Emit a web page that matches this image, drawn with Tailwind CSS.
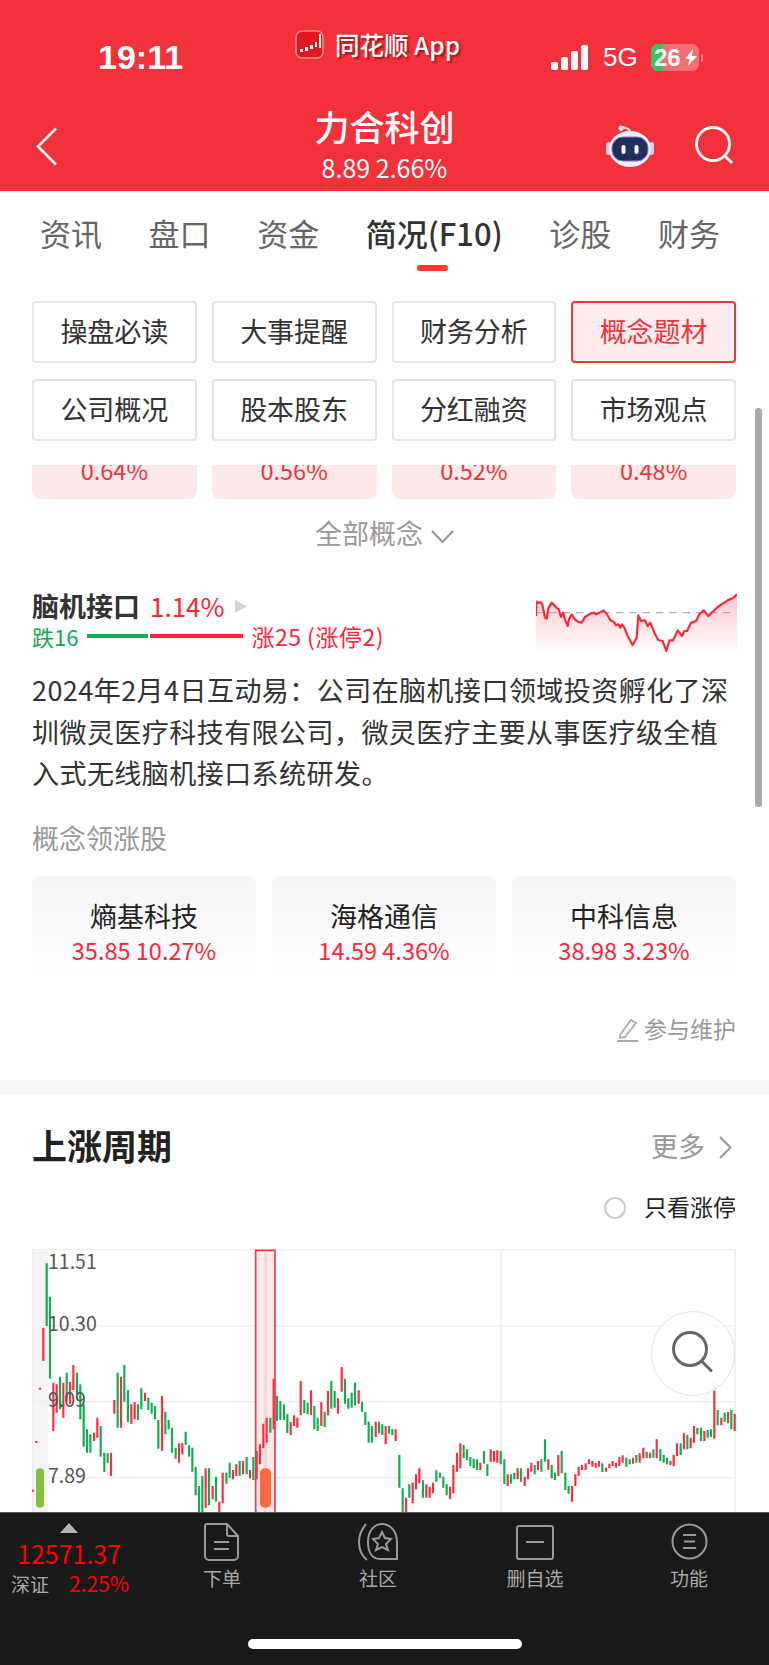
<!DOCTYPE html>
<html lang="zh">
<head>
<meta charset="utf-8">
<script src="https://cdn.jsdelivr.net/npm/@tailwindcss/browser@4"></script>
<title>力合科创</title>
</head>
<body>
<div class="relative w-[769px] h-[1665px] overflow-hidden flex flex-col bg-white font-['Noto_Sans_CJK_SC','Noto_Sans',sans-serif]">

  <!-- red header -->
  <header class="flex-none h-[191px] bg-[#f2313b] text-white">
    <div class="flex items-start h-[92px]">
      <div class="w-[295px] pl-[98px] pt-[41px] leading-[33px] text-[34px] font-bold font-['Liberation_Sans',sans-serif]">19:11</div>
      <div class="w-[256px] pt-[30px] flex items-start gap-[11px]">
        <svg class="w-[29px] h-[29px]" viewBox="0 0 29 29">
          <rect x="1" y="1" width="27" height="27" rx="6" fill="#e01820" stroke="#f98a8f" stroke-width="1.500"/>
          <path d="M5 19h3v3h-3zM10 17h3v4h-3zM15 15h3v4h-3zM20 12h2v5h-2z" fill="#fff"/>
          <path d="M25 4v14" stroke="#fff" stroke-width="2"/>
        </svg>
        <div class="text-[24.500px] leading-[29px] font-medium whitespace-nowrap [text-shadow:2px_2px_2px_rgba(90,0,0,0.55)]">同花顺 App</div>
      </div>
      <div class="pt-[44px] flex items-start">
        <svg class="w-[37px] h-[25px] mt-px" viewBox="0 0 37 25" fill="#fff">
          <rect x="0" y="17" width="7" height="8" rx="2"/><rect x="10" y="12" width="7" height="13" rx="2"/><rect x="20" y="6" width="7" height="19" rx="2"/><rect x="30" y="0" width="7" height="25" rx="2"/>
        </svg>
        <div class="ml-[15px] w-[48px] text-[26px] leading-[27px] font-medium font-['Liberation_Sans',sans-serif]">5G</div>
        <div class="relative w-[48px] h-[27px] rounded-[7px] overflow-hidden bg-white/30 flex items-center">
          <div class="w-[12px] h-full bg-[#34c759]"></div>
          <div class="absolute left-[3px] top-0 text-[24px] leading-[27px] font-bold font-['Liberation_Sans',sans-serif]">26</div>
          <svg class="absolute left-[34px] top-[5px] w-[12px] h-[17px]" viewBox="0 0 12 17"><path d="M8 0L0 10h4.500L3 17l9-10H7z" fill="#fff"/></svg>
        </div>
        <div class="w-[2px] h-[8px] mt-[10px] ml-[2px] rounded-r bg-white/40"></div>
      </div>
    </div>
    <div class="grid grid-cols-[180px_1fr_180px] h-[99px]">
      <div class="pl-[36px] pt-[35px]">
        <svg class="w-[22px] h-[39px]" viewBox="0 0 22 39" fill="none" stroke="#fff" stroke-width="2.500"><path d="M20 1.500L2 19.500l18 18"/></svg>
      </div>
      <div class="flex flex-col items-center pt-[14px]">
        <div class="text-[35px] leading-[40px] font-medium">力合科创</div>
        <div class="text-[25px] leading-[30px] mt-[6px]">8.89 2.66%</div>
      </div>
      <div class="flex items-start pl-[17px] pt-[33px]">
        <svg class="w-[48px] h-[43px] flex-none" viewBox="0 0 48 43">
          <path d="M15 6c-1-3 2-5 4-3 2 0 4 1 5 3" fill="none" stroke="#dfe0f5" stroke-width="2"/>
          <circle cx="15" cy="3" r="2.500" fill="#eef"/>
          <rect x="0" y="17" width="5" height="13" rx="2.500" fill="#cfd2ee"/>
          <rect x="43" y="17" width="5" height="13" rx="2.500" fill="#cfd2ee"/>
          <ellipse cx="24" cy="24" rx="21" ry="18" fill="#eef0fb"/>
          <rect x="6" y="12" width="36" height="24" rx="11" fill="#20305a" stroke="#8a6fe0" stroke-width="1"/>
          <rect x="15.500" y="20" width="4" height="9" rx="2" fill="#fff"/>
          <rect x="28.500" y="20" width="4" height="9" rx="2" fill="#fff"/>
        </svg>
        <svg class="ml-[41px] mt-[1px] w-[38px] h-[40px] flex-none" viewBox="0 0 38 40" fill="none" stroke="#fff" stroke-width="2.800"><circle cx="18" cy="18" r="16.500"/><path d="M30 30l7 7"/></svg>
      </div>
    </div>
  </header>

  <!-- scrolling content -->
  <main class="relative flex-1 overflow-hidden">
    <!-- tabs -->
    <nav class="flex justify-between pl-[40px] pr-[49px] pt-[22px] h-[110px] text-[31px] leading-[40px] text-[#666]">
      <span>资讯</span><span>盘口</span><span>资金</span>
      <span class="relative font-medium text-[#333]">简况(F10)<span class="absolute left-[51px] top-[52px] w-[31px] h-[6px] rounded-full bg-[#ff3b30]"></span></span>
      <span>诊股</span><span>财务</span>
    </nav>

    <!-- sub-tabs -->
    <div class="grid grid-cols-4 gap-x-[15px] gap-y-[16px] pl-[32px] pr-[33px] text-[27px] text-[#333]">
      <div class="h-[62px] pb-[2px] flex items-center justify-center border-2 border-[#e4e4e4] rounded-[4px]">操盘必读</div>
      <div class="h-[62px] pb-[2px] flex items-center justify-center border-2 border-[#e4e4e4] rounded-[4px]">大事提醒</div>
      <div class="h-[62px] pb-[2px] flex items-center justify-center border-2 border-[#e4e4e4] rounded-[4px]">财务分析</div>
      <div class="h-[62px] pb-[2px] flex items-center justify-center border-2 border-[#f0343c] rounded-[4px] bg-[#fdecee] text-[#f0343c]">概念题材</div>
      <div class="h-[62px] pb-[2px] flex items-center justify-center border-2 border-[#e4e4e4] rounded-[4px]">公司概况</div>
      <div class="h-[62px] pb-[2px] flex items-center justify-center border-2 border-[#e4e4e4] rounded-[4px]">股本股东</div>
      <div class="h-[62px] pb-[2px] flex items-center justify-center border-2 border-[#e4e4e4] rounded-[4px]">分红融资</div>
      <div class="h-[62px] pb-[2px] flex items-center justify-center border-2 border-[#e4e4e4] rounded-[4px]">市场观点</div>
    </div>

    <!-- clipped concept cards -->
    <div class="grid grid-cols-4 gap-x-[15px] pl-[32px] pr-[33px] mt-[24px] text-[23.500px] leading-[24px] text-[#f0343c] text-center">
      <div class="h-[34px] rounded-b-[8px] overflow-hidden bg-[#fde8ea]"><div class="-mt-[7px]">0.64%</div></div>
      <div class="h-[34px] rounded-b-[8px] overflow-hidden bg-[#fde8ea]"><div class="-mt-[7px]">0.56%</div></div>
      <div class="h-[34px] rounded-b-[8px] overflow-hidden bg-[#fde8ea]"><div class="-mt-[7px]">0.52%</div></div>
      <div class="h-[34px] rounded-b-[8px] overflow-hidden bg-[#fde8ea]"><div class="-mt-[7px]">0.48%</div></div>
    </div>

    <div class="flex items-center justify-center gap-[8px] mt-[17px] h-[36px] text-[27px] leading-[36px] text-[#999]">
      <span class="pb-[2px]">全部概念</span>
      <svg class="w-[23px] h-[14px] mt-[6px]" viewBox="0 0 23 14" fill="none" stroke="#999" stroke-width="2.200"><path d="M1 1l10.500 11L22 1"/></svg>
    </div>

    <!-- brain computer interface -->
    <section class="px-[32px] mt-[36px]">
      <div class="flex justify-between h-[68px]">
        <div>
          <div class="flex items-center h-[36px] text-[27px] leading-[36px]">
            <span class="font-bold text-[#333]">脑机接口</span>
            <span class="ml-[10px] text-[26px] text-[#ff2436]">1.14%</span>
            <svg class="ml-[11px] w-[12px] h-[13px]" viewBox="0 0 12 13"><path d="M0 0l12 6.500L0 13z" fill="#d2d2d2"/></svg>
          </div>
          <div class="flex items-center h-[24px] text-[23px] leading-[24px] whitespace-nowrap">
            <span class="text-[22px] text-[#0fae50]">跌16</span>
            <span class="ml-[9px] w-[61px] h-[4px] bg-[#0fae50]"></span>
            <span class="ml-[2px] w-[93px] h-[4px] bg-[#ff2436]"></span>
            <span class="ml-[8px] tracking-[0.5px] text-[#ff2436]">涨25 (涨停2)</span>
          </div>
        </div>
        <svg class="w-[201px] h-[68px]" viewBox="45 51 603 204">
          <defs><linearGradient id="sparkFill" x1="0" y1="0" x2="0" y2="1"><stop offset="0" stop-color="#ff2436" stop-opacity="0.25"/><stop offset="1" stop-color="#ff2436" stop-opacity="0"/></linearGradient></defs>
          <path fill="url(#sparkFill)" d="M45 135L46 92L52 95L60 94L65 105L72 140L77 143L82 112L92 95L100 103L108 112L113 114L120 138L126 125L132 145L140 165L144 145L152 130L162 145L172 153L182 155L192 138L205 130L218 125L225 130L238 124L248 118L258 130L268 148L278 152L285 163L292 160L298 170L303 160L310 170L320 195L335 222L347 200L352 133L360 150L372 148L380 165L388 155L400 185L412 207L425 210L436 240L445 208L456 208L470 178L483 195L490 180L498 180L510 155L525 150L535 130L548 118L562 135L572 125L590 108L605 98L620 88L635 82L648 70V255H45Z"/>
          <path d="M45 125H635" stroke="#b0b0b0" stroke-width="3.500" stroke-dasharray="22 18" fill="none"/>
          <path fill="none" stroke="#ff2436" stroke-width="6.500" stroke-linejoin="round" d="M45 135L46 92L52 95L60 94L65 105L72 140L77 143L82 112L92 95L100 103L108 112L113 114L120 138L126 125L132 145L140 165L144 145L152 130L162 145L172 153L182 155L192 138L205 130L218 125L225 130L238 124L248 118L258 130L268 148L278 152L285 163L292 160L298 170L303 160L310 170L320 195L335 222L347 200L352 133L360 150L372 148L380 165L388 155L400 185L412 207L425 210L436 240L445 208L456 208L470 178L483 195L490 180L498 180L510 155L525 150L535 130L548 118L562 135L572 125L590 108L605 98L620 88L635 82L648 70"/>
        </svg>
      </div>
      <p class="mt-[13px] text-[27px] leading-[41.500px] tracking-[0.45px] text-[#333]">2024年2月4日互动易：公司在脑机接口领域投资孵化了深圳微灵医疗科技有限公司，微灵医疗主要从事医疗级全植入式无线脑机接口系统研发。</p>
      <div class="mt-[26px] text-[27px] leading-[36px] text-[#999]">概念领涨股</div>
      <div class="grid grid-cols-3 gap-x-[16px] mt-[20px] pr-px text-center">
        <div class="h-[108px] pt-[21px] rounded-t-[8px] bg-gradient-to-b from-[#f5f5f5] to-white">
          <div class="text-[27px] leading-[38px] text-[#222]">熵基科技</div>
          <div class="text-[23.500px] leading-[30px] text-[#ff2436]">35.85 10.27%</div>
        </div>
        <div class="h-[108px] pt-[21px] rounded-t-[8px] bg-gradient-to-b from-[#f5f5f5] to-white">
          <div class="text-[27px] leading-[38px] text-[#222]">海格通信</div>
          <div class="text-[23.500px] leading-[30px] text-[#ff2436]">14.59 4.36%</div>
        </div>
        <div class="h-[108px] pt-[21px] rounded-t-[8px] bg-gradient-to-b from-[#f5f5f5] to-white">
          <div class="text-[27px] leading-[38px] text-[#222]">中科信息</div>
          <div class="text-[23.500px] leading-[30px] text-[#ff2436]">38.98 3.23%</div>
        </div>
      </div>
      <div class="flex justify-end items-center gap-[5px] mt-[31px] pr-px h-[30px] text-[23px] leading-[30px] text-[#999]">
        <svg class="w-[22px] h-[24px]" viewBox="0 0 22 24" fill="none" stroke="#aaa" stroke-width="1.800"><path d="M3 17L14 2l5 3L8 19l-5 1zM0 23h21"/></svg>
        <span class="pb-[4px]">参与维护</span>
      </div>
    </section>

    <div class="h-[15px] mt-[35px] bg-[#f6f6f6]"></div>

    <!-- rising cycle -->
    <section class="pl-[32px] pr-[33px] pt-[31px]">
      <div class="flex items-center justify-between h-[44px]">
        <h2 class="pb-[5px] text-[35px] leading-[44px] font-bold text-[#222]">上涨周期</h2>
        <div class="flex items-center gap-[14px] text-[27px] text-[#999]">
          <span class="pb-[2px]">更多</span>
          <svg class="w-[13px] h-[23px] mr-[4px]" viewBox="0 0 13 23" fill="none" stroke="#999" stroke-width="2"><path d="M1 1l10.500 10.500L1 22"/></svg>
        </div>
      </div>
      <div class="flex justify-end items-center gap-[18px] mt-[23px] h-[30px] text-[23px] leading-[30px] text-[#222]">
        <span class="w-[22px] h-[22px] rounded-full border-2 border-[#ccc]"></span>
        <span class="pb-[4px]">只看涨停</span>
      </div>
    </section>

    <!-- chart: a free canvas -->
    <div class="relative h-[264px] mt-[26px]">
      <svg class="absolute left-0 top-0 w-[769px] h-[264px]" viewBox="0 54 2307 792">
        <rect x="100" y="60" width="44" height="790" fill="#f4f4f7"/>
        <path d="M96 55H2211M96 285H2211M96 512H2211M96 740H2211M98 55V850M1503 55V850M2205 55V850" stroke="#efefef" stroke-width="5" fill="none"/>
        <rect x="767" y="58" width="58" height="800" fill="#fde8ea" stroke="#ff3347" stroke-width="5"/>
        <path d="M797 60V850" stroke="#f7d4d8" stroke-width="8"/>
        <g fill="none" stroke-width="6.500">
          <path stroke="#0fae50" d="M140 97V285M150 197V443M180 437V535M200 425V510M231 425V490M241 460V565M251 520V647M261 595V665M271 610V665M302 585V677M313 665V723M323 667V695M353 425V590M373 402V512M384 477V573M414 520V567M424 472V535M445 500V537M455 515V548M465 525V565M475 567V653M496 542V610M506 567V595M516 590V665M527 650V683M557 602V642M567 643V677M577 650V722M587 707V793M597 765V847M607 735V847M627 712V823M648 737V812M679 725V758M689 695V740M719 690V735M740 678V730M760 678V747M811 560V605M831 495V570M841 510V567M852 520V567M862 550V606M913 507V547M923 515V550M943 525V595M953 560V600M974 542V588M994 450V533M1004 480V530M1035 443V518M1045 502V533M1055 485V530M1065 455V523M1086 512V542M1096 543V582M1106 572V635M1116 585V635M1137 572V607M1147 580V612M1167 585V608M1177 595V612M1198 672V770"/>
          <path stroke="#ff2a40" d="M130 290V390M120 470V476M109 630V636M99 776V782M160 455V600M170 460V545M190 455V560M210 453V520M220 402V477M282 605V630M292 560V620M333 665V735M343 507V548M363 437V590M394 520V578M404 513V565M435 485V510M486 495V660M537 637V695M547 637V670M617 712V830M638 765V805M658 812V847M668 725V817M699 717V745M709 700V735M729 690V730M750 717V742M770 660V745M780 640V700M790 578V652M800 560V635M821 443V595M872 573V612M882 553V585M892 560V590M902 450V553M933 478V552M964 513V585M984 480V553M1014 502V548M1025 408V482M1076 478V518M1127 572V618M1157 585V640M1187 595V630"/>
          <g transform="translate(1200 0)">
            <path stroke="#0fae50" d="M8 772V847M28 760V800M69 748V800M109 718V752M120 725V740M130 737V770M140 760V793M191 642V682M201 655V688M211 678V705M221 683V712M231 685V717M252 660V698M262 700V735M302 660V700M313 685V760M333 730V758M343 725V745M363 712V752M404 702V730M424 685V722M435 625V692M455 702V742M465 725V747M485 660V727M496 725V777M506 765V788M607 697V723M679 680V707M689 685V700M709 672V695M740 662V682M760 655V680M781 655V690M791 672V695M801 680V700M842 637V672M862 612V655M892 590V610M903 590V630M923 597V620M933 595V618M953 537V583M974 545V572M994 537V595"/>
            <path stroke="#ff2a40" d="M18 800V847M38 755V817M48 730V775M58 712V757M79 760V800M89 767V800M99 755V787M150 767V805M160 702V787M171 665V722M181 637V712M241 695V717M272 655V692M282 660V692M292 658V695M323 730V765M353 712V745M374 737V765M384 712V745M394 695V722M414 690V717M445 685V717M475 672V735M516 765V812M526 730V765M536 707V735M546 702V717M557 697V717M567 685V700M577 690V707M587 695V710M597 690V707M618 710V722M628 698V712M638 690V705M648 695V710M658 678V705M668 673V695M699 680V698M719 667V695M730 650V682M750 665V682M770 625V682M811 690V702M821 672V705M831 637V675M852 607V655M872 620V652M882 585V635M913 600V630M943 480V623M964 560V583M984 543V577M1004 548V600"/>
            <path stroke="#fdb6bf" d="M943 455V480"/>
          </g>
        </g>
        <rect x="108" y="712" width="24" height="118" rx="12" fill="#84c13c"/>
        <circle cx="120" cy="855" r="11" fill="#f0a030"/>
        <rect x="780" y="712" width="33" height="118" rx="14" fill="#ff6a3d"/>
        <circle cx="796" cy="856" r="14" fill="#5878e0"/>
      </svg>
      <span class="absolute left-[48px] top-[-1px] text-[19.500px] leading-[26px] text-[#555]">11.51</span>
      <span class="absolute left-[48px] top-[61px] text-[19.500px] leading-[26px] text-[#555]">10.30</span>
      <span class="absolute left-[48px] top-[137px] text-[19.500px] leading-[26px] text-[#555]">9.09</span>
      <span class="absolute left-[48px] top-[213px] text-[19.500px] leading-[26px] text-[#555]">7.89</span>
      <div class="absolute left-[651px] top-[62px] w-[84px] h-[85px] rounded-full border border-[#e4e4e4] bg-white/70 flex items-center justify-center">
        <svg class="w-[42px] h-[44px] -mt-[1px]" viewBox="0 0 42 44" fill="none" stroke="#666" stroke-width="3"><circle cx="18" cy="18" r="16.500"/><path d="M30 30.500l9 9" stroke-linecap="round"/></svg>
      </div>
    </div>
  </main>

  <!-- scrollbar -->
  <div class="absolute left-[755px] top-[408px] w-[7px] h-[399px] rounded-full bg-[#a9a9a9]"></div>

  <!-- bottom bar -->
  <footer class="flex-none h-[153px] bg-[#191919] border-t border-[#555] flex flex-col">
    <div class="grid grid-cols-[147px_150px_162px_152px_158px] h-[126px] text-[#a8a8a8]">
      <div class="flex flex-col">
        <svg class="ml-[60px] mt-[10px] w-[18px] h-[10px]" viewBox="0 0 18 10"><path d="M9 0l9 10H0z" fill="#b4b4b4"/></svg>
        <div class="ml-[17px] mt-[5px] text-[25px] leading-[30px] text-[#ff0000]">12571.37</div>
        <div class="flex items-center mt-[1px] h-[30px]">
          <span class="ml-[11px] text-[19px]">深证</span>
          <span class="ml-[20px] text-[21px] text-[#ff0000]">2.25%</span>
        </div>
      </div>
      <div class="flex flex-col items-center">
        <svg class="mt-[10px] w-[36px] h-[38px]" viewBox="0 0 36 38" fill="none" stroke="#999" stroke-width="2"><path d="M3 1h20l11 12v20a4 4 0 0 1-4 4H5a4 4 0 0 1-4-4V3a2 2 0 0 1 2-2zM23 1v10a2 2 0 0 0 2 2h9M10 19h15M10 26h15"/></svg>
        <span class="mt-[3px] text-[19px] leading-[28px]">下单</span>
      </div>
      <div class="flex flex-col items-center">
        <svg class="mt-[9px] w-[40px] h-[39px]" viewBox="0 0 40 39" fill="none" stroke="#999" stroke-width="2"><path d="M39 37H22C14 37 10 30 10 20 10 9 16 2 24 2c8 0 15 7 15 18zM8 2C3 8 1 13 1 20c0 7 2 13 8 18"/><path d="M24 10l3 6 6 1-5 5 2 6-6-3-6 3 2-6-5-5 6-1z"/></svg>
        <span class="mt-[3px] text-[19px] leading-[28px]">社区</span>
      </div>
      <div class="flex flex-col items-center">
        <svg class="mt-[12px] w-[38px] h-[35px]" viewBox="0 0 38 35" fill="none" stroke="#999" stroke-width="2"><rect x="1" y="1" width="36" height="33" rx="2"/><path d="M10 17h18"/></svg>
        <span class="mt-[4px] text-[19px] leading-[28px]">删自选</span>
      </div>
      <div class="flex flex-col items-center pr-[2px]">
        <svg class="mt-[10px] w-[37px] h-[37px]" viewBox="0 0 37 37" fill="none" stroke="#999" stroke-width="2"><circle cx="18.500" cy="18.500" r="17"/><path d="M12 12h13M13 18.500h11M12 25h13"/></svg>
        <span class="mt-[4px] text-[19px] leading-[28px]">功能</span>
      </div>
    </div>
    <div class="w-[274px] h-[10px] rounded-full bg-white ml-[248px]"></div>
  </footer>
</div>
</body>
</html>
